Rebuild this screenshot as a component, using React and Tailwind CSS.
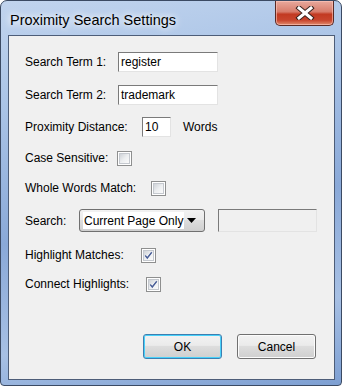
import React from 'react';

const font = { fontFamily: '"Liberation Sans", Arial, sans-serif' };

const Check = ({ checked }) => (
  <div className="w-[15px] h-[15px] border border-[#8e8f8f] bg-white p-[1px] flex-none">
    <div className="w-full h-full border border-[#c4c8ce] bg-gradient-to-br from-[#cfd3d8] via-[#eceef0] to-[#fbfbfb] flex items-center justify-center">
      {checked && (
        <svg width="11" height="11" viewBox="0 0 11 11">
          <path d="M1.5 5.5 L4 8.5 L9.5 1.5" fill="none" stroke="#ffffff" strokeWidth="3.2" strokeLinejoin="round" />
          <path d="M1.5 5.5 L4 8.5 L9.5 1.5" fill="none" stroke="#4a5f97" strokeWidth="1.8" />
        </svg>
      )}
    </div>
  </div>
);

const Field = ({ value, width, disabled }) => (
  <div
    className={`h-[20px] border border-t-[#7a7a7a] border-l-[#7a7a7a] border-r-[#e3e3e3] border-b-[#e3e3e3] ${
      disabled ? 'bg-[#f0f0f0]' : 'bg-white'
    } flex items-center pl-[2px] text-[12px] text-black`}
    style={{ width }}
  >
    {value}
  </div>
);

const Button = ({ label, primary }) => (
  <div
    className={`w-[79px] h-[25px] rounded-[3px] border ${
      primary ? 'border-[#3c7fb1] shadow-[inset_0_0_0_1px_#48d1fa]' : 'border-[#707070] shadow-[inset_0_0_0_1px_#fcfcfc]'
    } bg-[linear-gradient(#f2f2f2_0%,#ebebeb_45%,#dddddd_50%,#cfcfcf_100%)] flex items-center justify-center text-[12px] text-black`}
  >
    {label}
  </div>
);

export default function App() {
  return (
    <div
      className="w-[342px] h-[386px] rounded-t-[7px] rounded-b-[4px] border border-[#3b4a63] bg-[linear-gradient(170deg,#c1d4ee_0%,#a9c3e6_25%,#8aa9d8_55%,#a7c0e4_80%,#7d9fd2_100%)] relative overflow-hidden"
      style={font}
    >
      {/* Title bar */}
      <div className="h-[34px] flex items-start justify-between">
        <div className="pl-[9px] pt-[9px] text-[14.5px] text-black [text-shadow:0_0_6px_#ffffff,0_0_10px_#ffffff]">
          Proximity Search Settings
        </div>
        <div className="mr-[7px] mt-0 w-[59px] h-[25px] rounded-b-[5px] border border-t-0 border-[#5a2a25] bg-[linear-gradient(#e8a99d_0%,#d77c6b_45%,#c23a22_55%,#c8452d_80%,#e08c6f_100%)] shadow-[inset_0_0_0_1px_rgba(255,200,190,0.6)] flex items-center justify-center">
          <svg width="20" height="14" viewBox="0 0 20 14">
            <path d="M4 2 L16 12 M16 2 L4 12" stroke="#3a2420" strokeWidth="5" strokeLinecap="square" />
            <path d="M4 2 L16 12 M16 2 L4 12" stroke="#ffffff" strokeWidth="3" strokeLinecap="square" />
          </svg>
        </div>
      </div>

      {/* Client area */}
      <div className="ml-[7px] w-[327px] h-[345px] border border-[#4d5d78] bg-[#f0f0f0] pl-[16px] flex flex-col text-[12px] text-black">
        <div className="mt-[16px] h-[20px] flex items-center">
          <div className="w-[93px]">Search Term 1:</div>
          <Field value="register" width={100} />
        </div>
        <div className="mt-[13px] h-[20px] flex items-center">
          <div className="w-[93px]">Search Term 2:</div>
          <Field value="trademark" width={100} />
        </div>
        <div className="mt-[12px] h-[20px] flex items-center">
          <div className="w-[117px]">Proximity Distance:</div>
          <Field value="10" width={29} />
          <div className="ml-[12px]">Words</div>
        </div>
        <div className="mt-[11px] h-[20px] flex items-center">
          <div className="w-[92px]">Case Sensitive:</div>
          <Check />
        </div>
        <div className="mt-[10px] h-[20px] flex items-center">
          <div className="w-[126px]">Whole Words Match:</div>
          <Check />
        </div>
        <div className="mt-[11px] h-[23px] flex items-center">
          <div className="w-[54px]">Search:</div>
          <div className="w-[126px] h-[23px] rounded-[3px] border border-[#707070] bg-[linear-gradient(#f2f2f2_0%,#ebebeb_45%,#dddddd_50%,#cfcfcf_100%)] flex items-center pl-[3px] pr-[8px]">
            <div className="bg-white h-[17px] flex items-center pl-[1px] pr-[1px]">Current Page Only</div>
            <div className="flex-1" />
            <svg width="9" height="5" viewBox="0 0 9 5">
              <path d="M0 0 L9 0 L4.5 5 Z" fill="#000" />
            </svg>
          </div>
          <div className="ml-[13px] h-[23px] w-[99px] border border-t-[#7a7a7a] border-l-[#7a7a7a] border-r-[#e3e3e3] border-b-[#e3e3e3] bg-[#f0f0f0]" />
        </div>
        <div className="mt-[13px] h-[20px] flex items-center">
          <div className="w-[116px]">Highlight Matches:</div>
          <Check checked />
        </div>
        <div className="mt-[9px] h-[20px] flex items-center">
          <div className="w-[121px]">Connect Highlights:</div>
          <Check checked />
        </div>
        <div className="mt-[40px] flex pl-[118px] gap-[15px]">
          <Button label="OK" primary />
          <Button label="Cancel" />
        </div>
      </div>
    </div>
  );
}
